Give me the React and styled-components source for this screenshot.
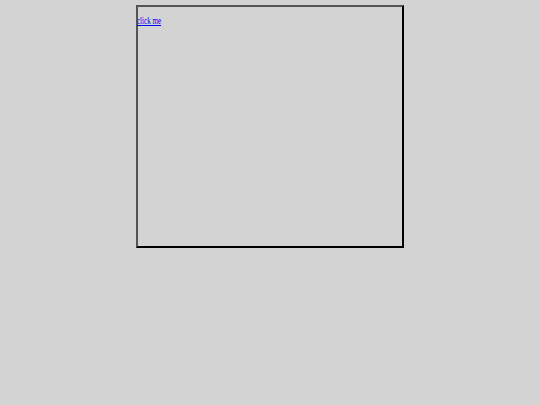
import React from 'react';
import styled, { createGlobalStyle } from 'styled-components';

const GlobalStyle = createGlobalStyle`
  html, body {
    margin: 0;
    padding: 0;
    background: #d3d3d3;
    font-family: "Liberation Serif", serif;
  }
`;

const Page = styled.div`
  display: flex;
  justify-content: center;
  padding-top: 5px;
`;

const Frame = styled.div`
  box-sizing: border-box;
  width: 268px;
  height: 243px;
  border: 2px outset #000;
  padding-top: 7px;
`;

const Link = styled.a`
  display: block;
  width: max-content;
  margin-left: -1px;
  font-size: 11px;
  line-height: 12px;
  color: #0000ee;
  text-decoration: underline;
  transform: scaleX(0.64);
  transform-origin: left center;
`;

export default function App() {
  return (
    <>
      <GlobalStyle />
      <Page>
        <Frame>
          <Link href="#">click me</Link>
        </Frame>
      </Page>
    </>
  );
}
